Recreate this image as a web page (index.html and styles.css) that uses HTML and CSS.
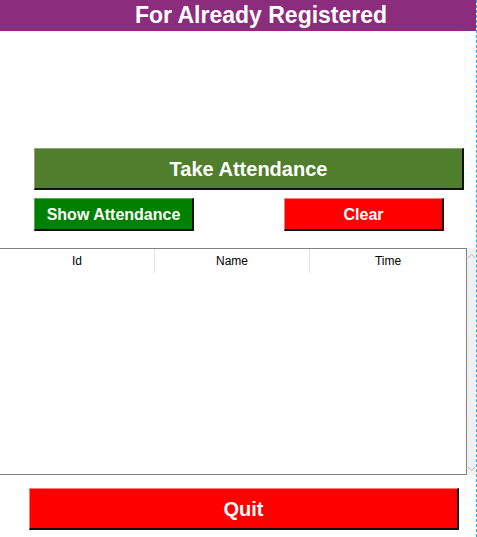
FILE: index.html
```html
<!DOCTYPE html>
<html>
<head>
<meta charset="utf-8">
<link rel="stylesheet" href="styles.css">
</head>
<body>
<div class="window">
  <div class="title">For Already Registered</div>
  <div class="spacer"></div>
  <div class="take-row">
    <button class="btn take">Take Attendance</button>
  </div>
  <div class="action-row">
    <button class="btn show">Show Attendance</button>
    <button class="btn clear">Clear</button>
  </div>
  <div class="table-row">
    <div class="table">
      <div class="thead">
        <div class="th">Id</div>
        <div class="th">Name</div>
        <div class="th last">Time</div>
      </div>
    </div>
    <div class="scrollbar">
      <svg class="arrow" width="9" height="9" viewBox="0 0 9 9"><path d="M1 6 L4.5 2.5 L8 6" fill="none" stroke="#b8b8b8" stroke-width="1"/></svg>
      <svg class="arrow" width="9" height="9" viewBox="0 0 9 9"><path d="M1 3 L4.5 6.5 L8 3" fill="none" stroke="#b8b8b8" stroke-width="1"/></svg>
    </div>
  </div>
  <div class="quit-row">
    <button class="btn quit">Quit</button>
  </div>
</div>
</body>
</html>
```

FILE: styles.css
```css
html, body {
  margin: 0;
  padding: 0;
  background: #ffffff;
  overflow: hidden;
}
.window {
  width: 476px;
  height: 537px;
  border-right: 1px dashed #1ab0e3;
  display: flex;
  flex-direction: column;
  font-family: "Liberation Sans", Arial, sans-serif;
}
.title {
  height: 31px;
  background: #8b2d7c;
  color: #ffffff;
  font-weight: bold;
  font-size: 23px;
  line-height: 31px;
  text-align: center;
  padding-left: 46px;
}
.spacer {
  height: 117px;
}
.btn {
  font-family: "Liberation Sans", Arial, sans-serif;
  font-weight: bold;
  color: #ffffff;
  padding: 1px 0 0;
  margin: 0;
  box-sizing: border-box;
  border-style: solid;
  border-width: 1px 2px 2px 1px;
  cursor: pointer;
}
.take-row {
  padding-left: 34px;
  display: flex;
}
.take {
  width: 430px;
  height: 42px;
  background: #517e2c;
  border-color: #8ea77a #111 #111 #8ea77a;
  font-size: 20px;
}
.action-row {
  margin-top: 8px;
  padding-left: 34px;
  display: flex;
  gap: 90px;
}
.show, .clear {
  width: 160px;
  height: 33px;
  font-size: 16px;
}
.show {
  background: #008000;
  border-color: #5aa85a #111 #111 #5aa85a;
}
.clear {
  background: #ff0000;
  border-color: #ff7a7a #111 #111 #ff7a7a;
}
.table-row {
  margin-top: 17px;
  display: flex;
  height: 227px;
}
.table {
  width: 467px;
  box-sizing: border-box;
  border: 1px solid #828282;
  border-left: none;
  background: #ffffff;
}
.thead {
  display: grid;
  grid-template-columns: 155px 155px 1fr;
  height: 24px;
}
.th {
  font-family: "Liberation Sans", Arial, sans-serif;
  font-size: 12px;
  color: #000000;
  text-align: center;
  line-height: 24px;
  border-right: 1px solid #e5e5e5;
}
.th.last {
  border-right: none;
}
.scrollbar {
  width: 9px;
  background: #f0f0f0;
  display: flex;
  flex-direction: column;
  justify-content: space-between;
  padding: 4px 0 2px;
  box-sizing: border-box;
}
.arrow {
  display: block;
}
.quit-row {
  margin-top: 13px;
  padding-left: 29px;
  display: flex;
}
.quit {
  width: 430px;
  height: 42px;
  background: #ff0000;
  border-color: #ff7a7a #111 #111 #ff7a7a;
  font-size: 20px;
}
```
